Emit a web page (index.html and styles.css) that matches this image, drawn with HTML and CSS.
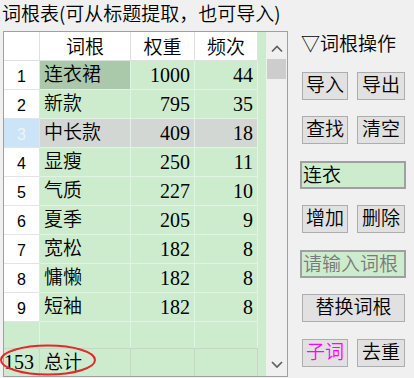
FILE: index.html
```html
<!DOCTYPE html>
<html lang="zh">
<head>
<meta charset="utf-8">
<title>词根表</title>
<link rel="stylesheet" href="styles.css">
</head>
<body>
<div class="title">词根表(可从标题提取，也可导入)</div>
<div class="main">
  <div class="frame">
    <div class="grid">
      <div class="row head">
        <div class="c rh"></div><div class="c c1">词根</div><div class="c c2">权重</div><div class="c c3">频次</div>
      </div>
      <div class="row"><div class="c rh">1</div><div class="c c1 sel">连衣裙</div><div class="c c2 num">1000</div><div class="c c3 num">44</div></div>
      <div class="row"><div class="c rh">2</div><div class="c c1">新款</div><div class="c c2 num">795</div><div class="c c3 num">35</div></div>
      <div class="row cur"><div class="c rh">3</div><div class="c c1">中长款</div><div class="c c2 num">409</div><div class="c c3 num">18</div></div>
      <div class="row"><div class="c rh">4</div><div class="c c1">显瘦</div><div class="c c2 num">250</div><div class="c c3 num">11</div></div>
      <div class="row"><div class="c rh">5</div><div class="c c1">气质</div><div class="c c2 num">227</div><div class="c c3 num">10</div></div>
      <div class="row"><div class="c rh">6</div><div class="c c1">夏季</div><div class="c c2 num">205</div><div class="c c3 num">9</div></div>
      <div class="row"><div class="c rh">7</div><div class="c c1">宽松</div><div class="c c2 num">182</div><div class="c c3 num">8</div></div>
      <div class="row"><div class="c rh">8</div><div class="c c1">慵懒</div><div class="c c2 num">182</div><div class="c c3 num">8</div></div>
      <div class="row"><div class="c rh">9</div><div class="c c1">短袖</div><div class="c c2 num">182</div><div class="c c3 num">8</div></div>
      <div class="row blank"><div class="c rh"></div><div class="c c1"></div><div class="c c2"></div><div class="c c3"></div></div>
      <div class="row total"><div class="c rh">153</div><div class="c c1">总计</div><div class="c c2"></div><div class="c c3"></div></div>
    </div>
    <div class="scroll">
      <div class="sb-btn"><svg width="21" height="27" viewBox="0 0 21 27"><polyline points="6,19.5 11,14.5 16,19.5" fill="none" stroke="#606060" stroke-width="1.7"/></svg></div>
      <div class="thumb"></div>
      <div class="track"></div>
      <div class="sb-btn"><svg width="21" height="27" viewBox="0 0 21 27"><polyline points="6,13 11,18 16,13" fill="none" stroke="#606060" stroke-width="1.7"/></svg></div>
    </div>
  </div>
  <div class="panel">
    <div class="heading">▽词根操作</div>
    <div class="btnrow"><div class="btn w1">导入</div><div class="btn w2">导出</div></div>
    <div class="btnrow"><div class="btn w1">查找</div><div class="btn w2">清空</div></div>
    <div class="field">连衣</div>
    <div class="btnrow"><div class="btn w1">增加</div><div class="btn w2">删除</div></div>
    <div class="field ph">请输入词根</div>
    <div class="btn wide">替换词根</div>
    <div class="btnrow"><div class="btn w1 magenta">子词</div><div class="btn w2">去重</div></div>
  </div>
</div>
<svg class="mark" width="100" height="38" viewBox="0 0 100 38"><ellipse cx="48" cy="20" rx="47" ry="14.5" fill="none" stroke="#e5262a" stroke-width="2"/></svg>
</body>
</html>
```
FILE: styles.css
```css
body {
  margin: 0;
  width: 414px;
  height: 378px;
  overflow: hidden;
  position: relative;
  background: #f0f0f0;
  color: #000;
  font-family: "Noto Sans CJK SC", sans-serif;
  font-size: 19px;
  font-weight: 350;
}
.title {
  line-height: 25px;
  padding-left: 2px;
  white-space: nowrap;
}
.main {
  display: flex;
  margin-top: 6px;
  padding-left: 3px;
  gap: 12px;
}
.frame {
  display: flex;
  width: 285px;
  height: 346px;
  box-sizing: border-box;
  border: 1px solid #a0a0a0;
}
.grid {
  width: 262px;
  background: #cdeccd;
  display: flex;
  flex-direction: column;
}
.row {
  display: flex;
  height: 29px;
  flex: none;
}
.c {
  box-sizing: border-box;
  height: 100%;
  border-right: 1px solid #e3f3e3;
  border-bottom: 1px solid #e3f3e3;
  line-height: 28px;
  white-space: nowrap;
}
.rh {
  width: 36px;
  background: #fff;
  border-color: #e4e4e4;
  text-align: center;
  font-family: "Liberation Sans", sans-serif;
  font-size: 16px;
  font-weight: 400;
  line-height: 26px;
  padding-top: 3px;
}
.c1 {
  width: 91px;
  padding-left: 4px;
  line-height: 24px;
}
.c2 { width: 64px; }
.c3 { width: 63px; }
.num {
  text-align: right;
  padding-right: 4px;
  font-family: "Liberation Serif", serif;
  font-size: 20px;
  font-weight: 400;
}
.head .c {
  background: #fff;
  border-color: #e0e0e0;
  text-align: center;
  line-height: 28px;
  padding: 0;
}
.sel { background: #aac8aa; }
.cur .c { background: #d3d7d3; }
.cur .rh { background: #cce4f7; color: #eef4fa; }
.blank { flex: 1; }
.blank .c { border-bottom: none; }
.blank .rh { background: transparent; border-color: #e3f3e3; }
.total { height: 28px; }
.total .c {
  border-top: 1px solid #c8d5c8;
  border-right-color: #c8d5c8;
  border-bottom: none;
}
.total .rh {
  background: transparent;
  text-align: left;
  padding: 0;
  font-family: "Liberation Serif", serif;
  font-size: 20px;
  line-height: 27px;
}
.total .c1 { line-height: 23px; }
.scroll {
  width: 21px;
  background: #f0f0f0;
  display: flex;
  flex-direction: column;
}
.sb-btn {
  height: 27px;
  flex: none;
}
.sb-btn svg { display: block; }
.thumb {
  height: 20px;
  margin: 0 1px;
  background: #cdcdcd;
  flex: none;
}
.track { flex: 1; }
.panel {
  width: 106px;
  display: flex;
  flex-direction: column;
  gap: 16.5px;
}
.heading {
  line-height: 24px;
  padding-left: 1px;
  white-space: nowrap;
}
.btnrow {
  display: flex;
  justify-content: space-between;
  padding: 0 1px 0 2px;
}
.btn {
  height: 28px;
  box-sizing: border-box;
  border: 1px solid #adadad;
  background: #e1e1e1;
  text-align: center;
  line-height: 22px;
  white-space: nowrap;
}
.w1 { width: 46px; }
.w2 { width: 48px; }
.wide { width: 103px; margin-left: 2px; }
.magenta { color: #ff00ff; }
.field {
  height: 28px;
  box-sizing: border-box;
  border: 2px solid #a0a0a0;
  background: #cdeccd;
  padding-left: 1px;
  line-height: 21px;
  white-space: nowrap;
}
.ph { color: #7a7a7a; }
.mark {
  position: absolute;
  left: 0;
  top: 340px;
}
```
